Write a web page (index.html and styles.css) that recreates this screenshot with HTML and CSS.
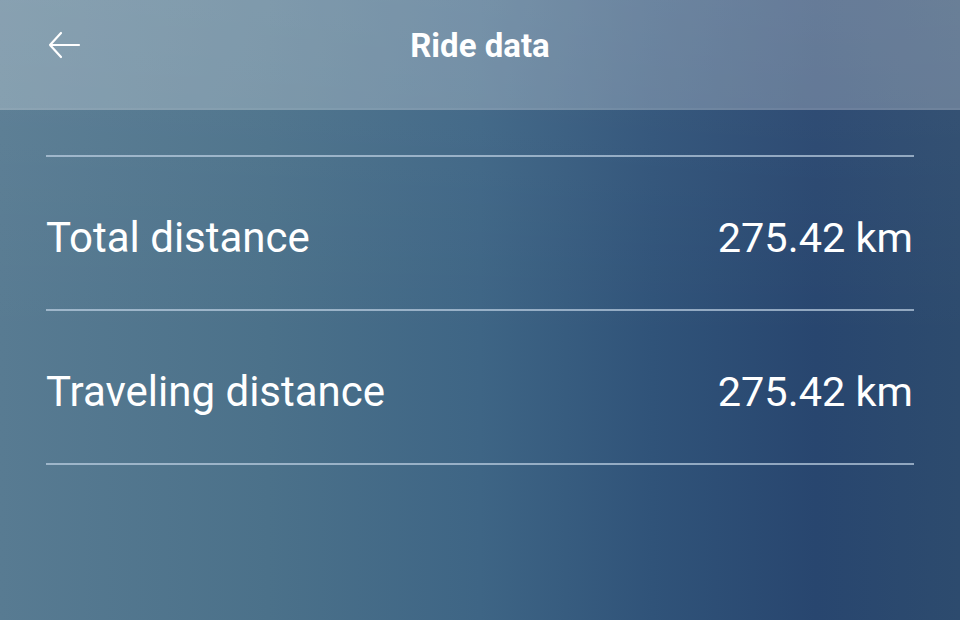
FILE: index.html
```html
<!DOCTYPE html>
<html lang="en">
<head>
    <meta charset="UTF-8">
    <meta name="viewport" content="width=device-width, initial-scale=1.0">
    <title>Ride data</title>
    <link rel="stylesheet" href="styles.css">
</head>
<body>
    <div class="screen">
        <div class="topbar">
            <button class="back" aria-label="Back">
                <svg width="34" height="28" viewBox="0 0 34 28">
                    <path d="M32 14H3M14 2L3 14l11 12" fill="none" stroke="#fff" stroke-width="2.2" stroke-linecap="round" stroke-linejoin="round"/>
                </svg>
            </button>
            <h1 class="title">Ride data</h1>
        </div>
        <div class="list">
            <div class="row">
                <span class="label">Total distance</span>
                <span class="value">275.42 km</span>
            </div>
            <div class="row">
                <span class="label">Traveling distance</span>
                <span class="value">275.42 km</span>
            </div>
        </div>
    </div>
</body>
</html>
```

FILE: styles.css
```css
html, body {
    margin: 0;
    height: 100%;
}
body {
    font-family: Roboto, "Noto Sans", sans-serif;
    color: #fff;
    background:
        linear-gradient(to bottom, rgba(255, 255, 255, 0.05), rgba(255, 255, 255, 0) 55%),
        linear-gradient(to right, #587b92 0%, #4b718a 28%, #3e6585 50%, #305379 68%, #28466f 85%, #2d4b6e 100%);
    overflow: hidden;
}
.screen {
    height: 620px;
    display: flex;
    flex-direction: column;
}
.topbar {
    height: 110px;
    display: flex;
    align-items: center;
    justify-content: center;
    position: relative;
    background: rgba(255, 255, 255, 0.25);
    border-bottom: 2px solid rgba(255, 255, 255, 0.06);
    box-sizing: border-box;
    padding-bottom: 18px;
}
.back {
    position: absolute;
    left: 47px;
    top: 31px;
    padding: 0;
    border: none;
    background: none;
    cursor: pointer;
}
.back svg {
    display: block;
}
.title {
    margin: 0;
    font-size: 33px;
    font-weight: 700;
}
.list {
    margin: 45px 46px 0;
    border-top: 2px solid rgba(190, 208, 226, 0.7);
}
.row {
    height: 154px;
    display: flex;
    align-items: center;
    justify-content: space-between;
    border-bottom: 2px solid rgba(190, 208, 226, 0.7);
    font-size: 42px;
    padding-top: 8px;
    box-sizing: border-box;
}
.value {
    margin-right: 1px;
    font-size: 41.5px;
}
```
